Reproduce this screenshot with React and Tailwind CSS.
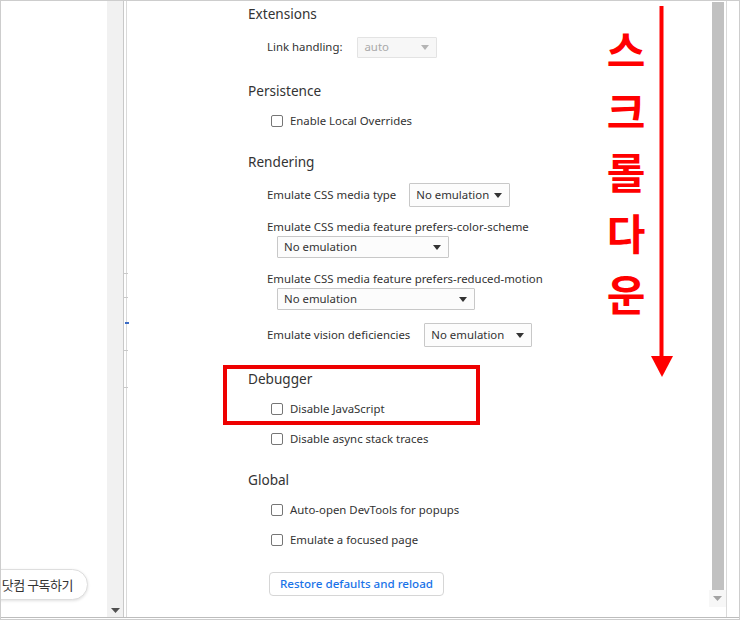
import { useState } from "react";

function Checkbox({ label }) {
  const [checked, setChecked] = useState(false);
  return (
    <label className="ml-[23px] flex h-[20px] items-center gap-[7px] cursor-pointer">
      <span
        onClick={() => setChecked(!checked)}
        className={`h-[12px] w-[12px] rounded-[2px] border border-[#767676] ${checked ? "bg-[#1a73e8]" : "bg-white"}`}
      />
      <span className="text-[11.4px] text-[#333]">{label}</span>
    </label>
  );
}

function Select({ value, width, disabled }) {
  return (
    <div
      className={`flex h-full items-center justify-between rounded-[1px] border pl-[6px] pr-[7px] text-[11.4px] ${
        disabled
          ? "border-[#e3e3e3] bg-[#f7f7f7] text-[#a9a9a9]"
          : "border-[#c8c8c8] bg-[#fcfcfc] text-[#333]"
      }`}
      style={{ width }}
    >
      <span>{value}</span>
      <svg width="8" height="5" viewBox="0 0 8 5">
        <path d="M0 0 H8 L4 5 Z" fill={disabled ? "#b4b4b4" : "#333"} />
      </svg>
    </div>
  );
}

function Heading({ children, className = "" }) {
  return (
    <div className={`h-[20px] text-[13.6px] leading-[20px] text-[#333] ${className}`}>{children}</div>
  );
}

export default function App() {
  return (
    <div className="relative h-[620px] w-[740px] overflow-hidden border border-[#cdcdcd] bg-white font-['Noto_Sans',sans-serif]">
      <div className="flex h-[616px]">
        {/* page behind devtools */}
        <div className="relative w-[106px]">
          <div className="absolute bottom-[17px] right-[19px] flex h-[31px] items-center whitespace-nowrap rounded-full border border-[#dedede] bg-white pl-[20px] pr-[14px] text-[13px] tracking-[-0.5px] text-[#333] shadow-[0_1px_3px_rgba(0,0,0,0.12)] font-['Noto_Sans_CJK_KR',sans-serif]">
            닷컴 구독하기
          </div>
        </div>
        <div className="flex w-[17px] flex-col items-center justify-end border-r border-[#c9c9c9] bg-[#f1f1f1] pb-[4px]">
          <svg width="9" height="5" viewBox="0 0 9 5">
            <path d="M0 0 H9 L4.5 5 Z" fill="#505050" />
          </svg>
        </div>
        <div className="w-[2px]" />

        {/* settings panel */}
        <div className="flex flex-1 border-x border-[#dadada]">
          <div className="flex-1 pl-[121px] pt-[3px]">
            <Heading>Extensions</Heading>
            <div className="ml-[19px] mt-[12px] flex h-[22px] items-center gap-[15px]">
              <span className="text-[11.4px] text-[#333]">Link handling:</span>
              <div className="h-[21px]">
                <Select value="auto" width={80} disabled />
              </div>
            </div>

            <Heading className="mt-[23px]">Persistence</Heading>
            <div className="mt-[10px]">
              <Checkbox label="Enable Local Overrides" />
            </div>

            <Heading className="mt-[21px]">Rendering</Heading>
            <div className="ml-[19px] mt-[11px] flex h-[24px] items-center gap-[13px]">
              <span className="text-[11.4px] text-[#333]">Emulate CSS media type</span>
              <Select value="No emulation" width={101} />
            </div>
            <div className="ml-[19px] mt-[12px] h-[16px] text-[11.4px] leading-[16px] text-[#333]">
              Emulate CSS media feature prefers-color-scheme
            </div>
            <div className="ml-[29px] mt-[1px] h-[22px]">
              <Select value="No emulation" width={172} />
            </div>
            <div className="ml-[19px] mt-[13px] h-[16px] text-[11.4px] leading-[16px] text-[#333]">
              Emulate CSS media feature prefers-reduced-motion
            </div>
            <div className="ml-[29px] mt-[1px] h-[22px]">
              <Select value="No emulation" width={198} />
            </div>
            <div className="ml-[19px] mt-[13px] flex h-[24px] items-center gap-[14px]">
              <span className="text-[11.4px] text-[#333]">Emulate vision deficiencies</span>
              <Select value="No emulation" width={108} />
            </div>

            <Heading className="mt-[22px]">Debugger</Heading>
            <div className="mt-[10px]">
              <Checkbox label="Disable JavaScript" />
            </div>
            <div className="mt-[10px]">
              <Checkbox label="Disable async stack traces" />
            </div>

            <Heading className="mt-[21px]">Global</Heading>
            <div className="mt-[10px]">
              <Checkbox label="Auto-open DevTools for popups" />
            </div>
            <div className="mt-[10px]">
              <Checkbox label="Emulate a focused page" />
            </div>

            <button className="ml-[21px] mt-[22px] h-[24px] w-[175px] rounded-[4px] border border-[#d6d6d6] bg-white text-[11.6px] font-medium text-[#1a73e8]">
              Restore defaults and reload
            </button>
          </div>

          {/* scrollbar */}
          <div className="flex w-[17px] flex-col pt-[1px]">
            <div className="mx-auto h-[588px] w-[12px] bg-[#c1c1c1]" />
            <div className="flex h-[17px] items-center justify-center bg-[#f7f7f7]">
              <svg width="9" height="5" viewBox="0 0 9 5">
                <path d="M0 0 H9 L4.5 5 Z" fill="#a3a3a3" />
              </svg>
            </div>
          </div>
        </div>
        <div className="w-[12px]" />
      </div>
      <div className="border-t border-[#bdbdbd]" />

      {/* marks of the panel behind */}
      <div className="absolute left-[123px] top-[272px] h-px w-[4px] bg-[#c9c9c9]" />
      <div className="absolute left-[123px] top-[296px] h-px w-[4px] bg-[#c9c9c9]" />
      <div className="absolute left-[124px] top-[321px] h-[2px] w-[4px] bg-[#3b6cc5]" />
      <div className="absolute left-[123px] top-[349px] h-px w-[4px] bg-[#c9c9c9]" />
      <div className="absolute left-[123px] top-[386px] h-px w-[4px] bg-[#c9c9c9]" />

      {/* annotation: highlight box */}
      <div className="absolute left-[222px] top-[364px] h-[60px] w-[257px] border-[4px] border-[#ee0000]" />

      {/* annotation: scroll down */}
      <div className="absolute left-[604px] top-[17px] flex w-[42px] flex-col items-center text-[42px] font-bold leading-[61px] text-[#f00] font-['Noto_Sans_CJK_KR',sans-serif]">
        <span>스</span>
        <span>크</span>
        <span>롤</span>
        <span>다</span>
        <span>운</span>
      </div>
      <svg className="absolute left-[649px] top-[5px]" width="24" height="372" viewBox="0 0 24 372">
        <rect x="9.5" y="0" width="4" height="352" fill="#f00" />
        <path d="M1 350 H23 L12 371 Z" fill="#f00" />
      </svg>
    </div>
  );
}
